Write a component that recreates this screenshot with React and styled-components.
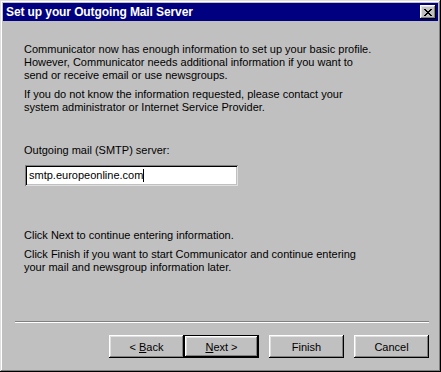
import React from 'react'
import styled, { createGlobalStyle } from 'styled-components'

const GlobalStyle = createGlobalStyle`
  html, body {
    margin: 0;
    padding: 0;
    background: #c0c0c0;
  }
  body {
    font-family: "Liberation Sans", Arial, sans-serif;
    font-size: 11px;
    color: #000;
  }
`

const Window = styled.div`
  width: 441px;
  height: 372px;
  box-sizing: border-box;
  padding: 3px;
  background: #c0c0c0;
  display: flex;
  flex-direction: column;
  box-shadow: inset -1px -1px #000, inset 1px 1px #dfdfdf,
    inset -2px -2px #808080, inset 2px 2px #fff;
`

const TitleBar = styled.div`
  height: 18px;
  background: #000080;
  display: flex;
  align-items: center;
  justify-content: space-between;
  padding: 0 2px 0 3px;
`

const Title = styled.span`
  color: #fff;
  font-weight: bold;
  font-size: 12px;
  letter-spacing: -0.1px;
`

const CloseButton = styled.div`
  width: 16px;
  height: 14px;
  box-sizing: border-box;
  background: #c0c0c0;
  display: flex;
  align-items: center;
  justify-content: center;
  box-shadow: inset -1px -1px #000, inset 1px 1px #fff,
    inset -2px -2px #808080, inset 2px 2px #dfdfdf;
`

const Body = styled.div`
  flex: 1;
  display: flex;
  flex-direction: column;
  padding: 22px 9px 11px 21px;
`

const Text = styled.p`
  margin: ${p => p.$top || 0}px 0 0 0;
  line-height: 13px;
`

const Field = styled.div`
  margin: 8px 0 0 1px;
  width: 213px;
  height: 21px;
  box-sizing: border-box;
  background: #fff;
  padding: 0 4px;
  display: flex;
  align-items: center;
  box-shadow: inset 1px 1px #808080, inset -1px -1px #dfdfdf,
    inset 2px 2px #000, inset -2px -2px #c0c0c0;
`

const Value = styled.span`
  line-height: 13px;
  border-right: 1px solid #000;
`

const Separator = styled.div`
  margin: auto 0 0 -9px;
  border-top: 1px solid #808080;
  border-bottom: 1px solid #fff;
`

const Buttons = styled.div`
  margin-top: 12px;
  display: flex;
  justify-content: flex-end;
`

const Button = styled.div`
  width: 75px;
  height: 23px;
  box-sizing: border-box;
  margin-left: ${p => p.$gap || 0}px;
  display: flex;
  align-items: center;
  justify-content: center;
  background: #c0c0c0;
  box-shadow: ${p =>
    p.$default
      ? 'inset 0 0 0 1px #000, inset -2px -2px #000, inset 2px 2px #fff, inset -3px -3px #808080, inset 3px 3px #dfdfdf'
      : 'inset -1px -1px #000, inset 1px 1px #fff, inset -2px -2px #808080, inset 2px 2px #dfdfdf'};
`

const Key = styled.span`
  text-decoration: underline;
  text-underline-offset: 1px;
`

const CloseIcon = () => (
  <svg width="8" height="7" viewBox="0 0 8 7" shapeRendering="crispEdges">
    <path
      d="M0 0h2v1H0zM6 0h2v1H6zM1 1h2v1H1zM5 1h2v1H5zM2 2h4v1H2zM3 3h2v1H3zM2 4h4v1H2zM1 5h2v1H1zM5 5h2v1H5zM0 6h2v1H0zM6 6h2v1H6z"
      fill="#000"
    />
  </svg>
)

export default function App() {
  return (
    <>
      <GlobalStyle />
      <Window>
        <TitleBar>
          <Title>Set up your Outgoing Mail Server</Title>
          <CloseButton>
            <CloseIcon />
          </CloseButton>
        </TitleBar>
        <Body>
          <Text>
            Communicator now has enough information to set up your basic profile.
            <br />
            However, Communicator needs additional information if you want to
            <br />
            send or receive email or use newsgroups.
          </Text>
          <Text $top={6}>
            If you do not know the information requested, please contact your
            <br />
            system administrator or Internet Service Provider.
          </Text>
          <Text $top={30}>Outgoing mail (SMTP) server:</Text>
          <Field>
            <Value>smtp.europeonline.com</Value>
          </Field>
          <Text $top={43}>Click Next to continue entering information.</Text>
          <Text $top={6}>
            Click Finish if you want to start Communicator and continue entering
            <br />
            your mail and newsgroup information later.
          </Text>
          <Separator />
          <Buttons>
            <Button>
              &lt;&nbsp;<Key>B</Key>ack
            </Button>
            <Button $default>
              <Key>N</Key>ext &gt;
            </Button>
            <Button $gap={10}>Finish</Button>
            <Button $gap={10}>Cancel</Button>
          </Buttons>
        </Body>
      </Window>
    </>
  )
}
